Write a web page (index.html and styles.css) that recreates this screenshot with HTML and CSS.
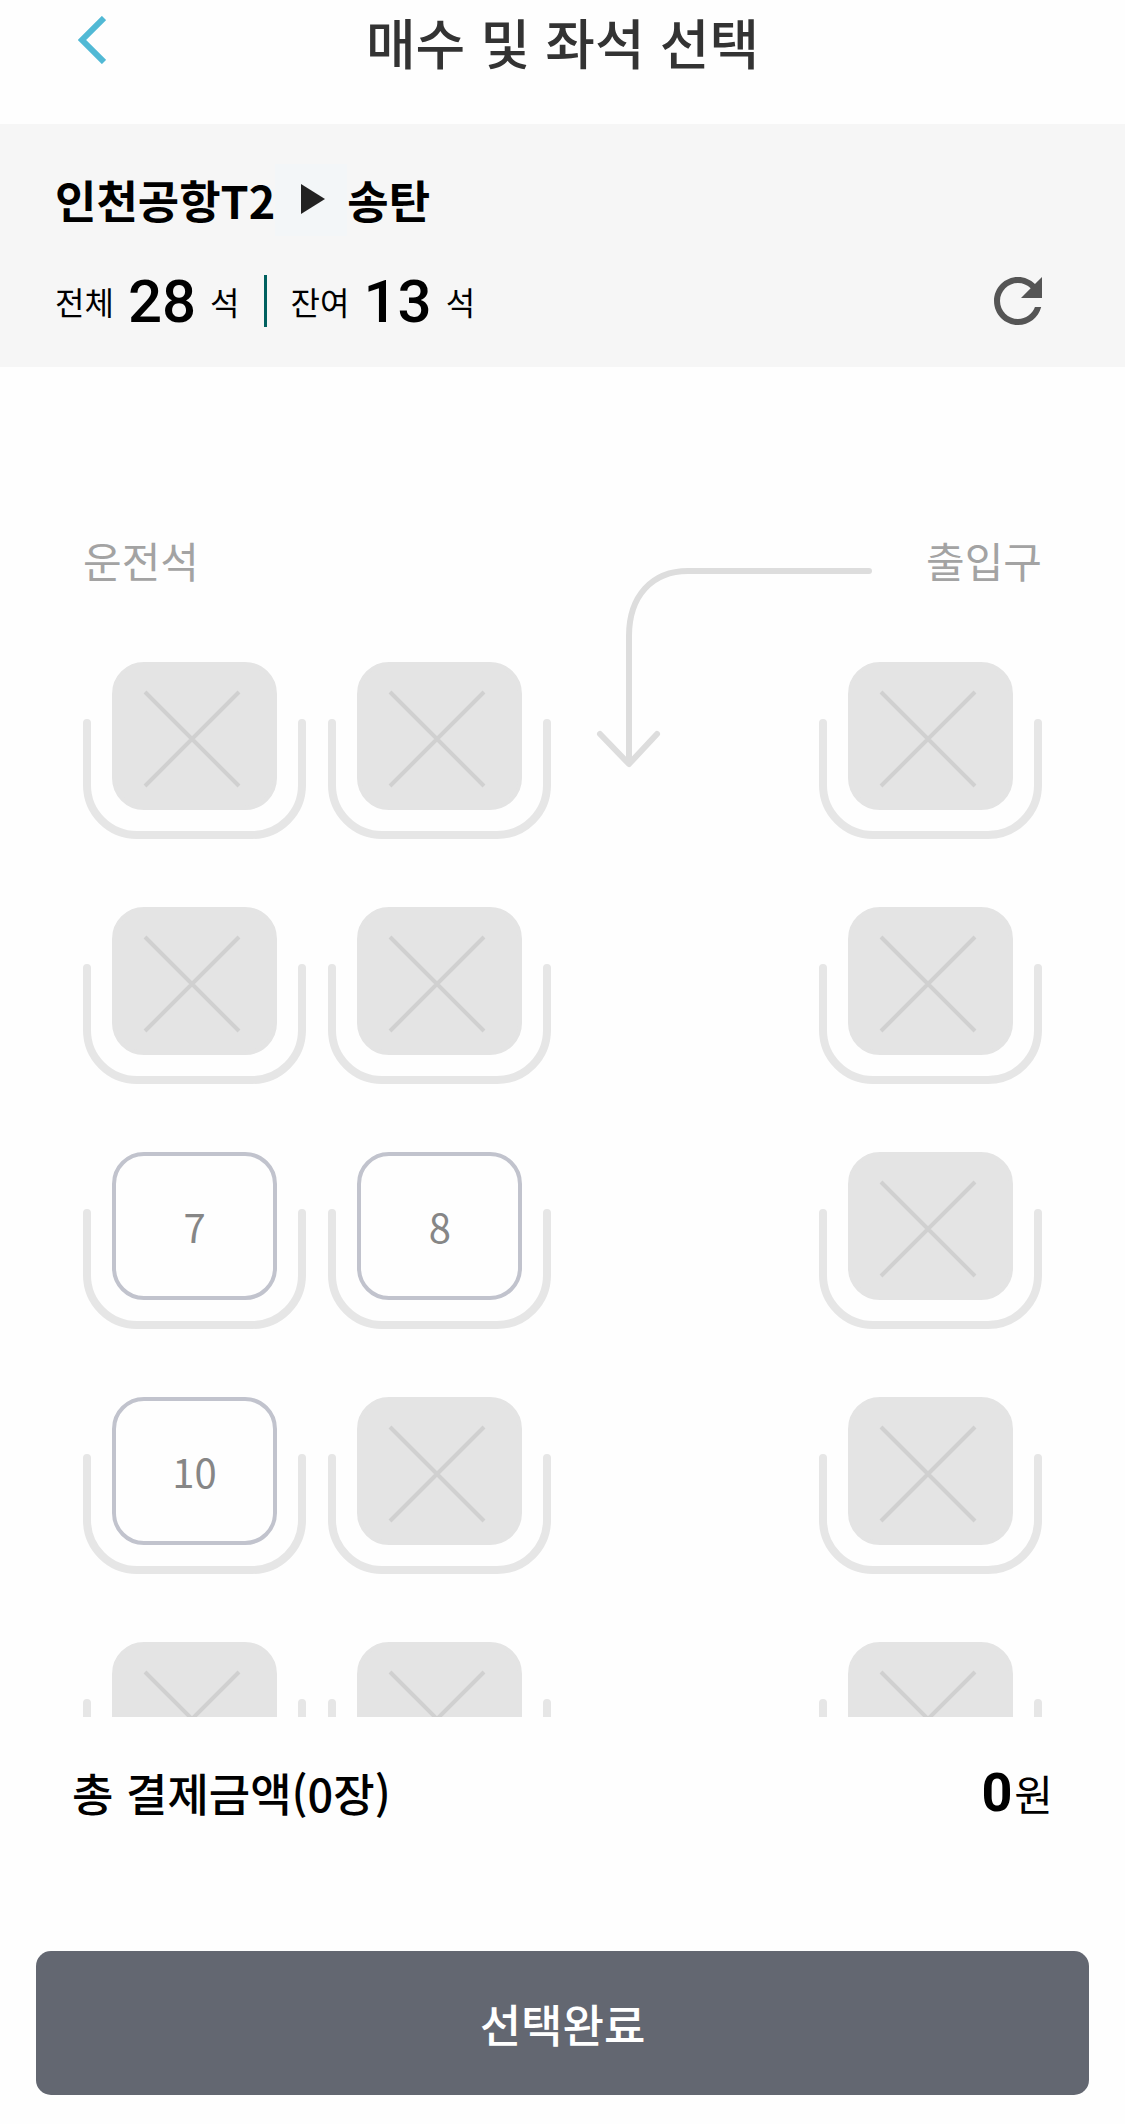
FILE: index.html
```html
<!DOCTYPE html>
<html lang="ko">
<head>
    <meta charset="UTF-8">
    <meta name="viewport" content="width=device-width, initial-scale=1.0">
    <title>매수 및 좌석 선택</title>
    <link rel="stylesheet" href="styles.css">
</head>
<body>
    <!-- shared seat shapes -->
    <svg class="sprite" aria-hidden="true">
        <symbol id="seat-back" viewBox="0 0 223 120">
            <path d="M4 4V66A50 50 0 0 0 54 116H169A50 50 0 0 0 219 66V4"/>
        </symbol>
        <symbol id="seat-cross" viewBox="0 0 98 98">
            <path d="M2 2L96 96M96 2L2 96"/>
        </symbol>
    </svg>

    <header class="top-bar">
        <a href="#" class="btn-back" aria-label="뒤로">
            <svg viewBox="0 0 28 48"><path d="M26 2L4 24L26 46"/></svg>
        </a>
        <h1>매수 및 좌석 선택</h1>
    </header>

    <section class="trip-info">
        <div class="route">
            <span>인천공항T2</span>
            <svg class="route-arrow" viewBox="0 0 72 72"><path d="M26 20L50 35L26 50Z"/></svg>
            <span>송탄</span>
        </div>
        <div class="seat-status">
            <p class="seat-count">전체 <strong>28</strong> 석</p>
            <p class="seat-count">잔여 <strong>13</strong> 석</p>
            <button type="button" class="btn-refresh" aria-label="새로고침">
                <svg viewBox="0 0 24 24"><path d="M17.65 6.35C16.2 4.9 14.21 4 12 4c-4.42 0-7.99 3.58-7.99 8s3.57 8 7.99 8c3.73 0 6.84-2.55 7.73-6h-2.08c-.82 2.33-3.04 4-5.65 4-3.31 0-6-2.69-6-6s2.69-6 6-6c1.66 0 3.14.69 4.22 1.78L13 11h7V4l-2.35 2.35z"/></svg>
            </button>
        </div>
    </section>

    <main class="seat-map">
        <div class="cabin-head">
            <span>운전석</span>
            <span>출입구</span>
            <svg class="door-path" viewBox="0 0 280 200">
                <path d="M273 3H92C56 3 33 28 33 68V194M4 166L33 196L61 166"/>
            </svg>
        </div>

        <div class="seat-grid">
            <button type="button" class="seat taken" aria-label="1번 좌석" disabled><svg class="back"><use href="#seat-back"/></svg><span class="cushion"><svg class="cross"><use href="#seat-cross"/></svg></span></button>
            <button type="button" class="seat taken" aria-label="2번 좌석" disabled><svg class="back"><use href="#seat-back"/></svg><span class="cushion"><svg class="cross"><use href="#seat-cross"/></svg></span></button>
            <button type="button" class="seat taken single" aria-label="3번 좌석" disabled><svg class="back"><use href="#seat-back"/></svg><span class="cushion"><svg class="cross"><use href="#seat-cross"/></svg></span></button>

            <button type="button" class="seat taken" aria-label="4번 좌석" disabled><svg class="back"><use href="#seat-back"/></svg><span class="cushion"><svg class="cross"><use href="#seat-cross"/></svg></span></button>
            <button type="button" class="seat taken" aria-label="5번 좌석" disabled><svg class="back"><use href="#seat-back"/></svg><span class="cushion"><svg class="cross"><use href="#seat-cross"/></svg></span></button>
            <button type="button" class="seat taken single" aria-label="6번 좌석" disabled><svg class="back"><use href="#seat-back"/></svg><span class="cushion"><svg class="cross"><use href="#seat-cross"/></svg></span></button>

            <button type="button" class="seat"><svg class="back"><use href="#seat-back"/></svg><span class="cushion">7</span></button>
            <button type="button" class="seat"><svg class="back"><use href="#seat-back"/></svg><span class="cushion">8</span></button>
            <button type="button" class="seat taken single" aria-label="9번 좌석" disabled><svg class="back"><use href="#seat-back"/></svg><span class="cushion"><svg class="cross"><use href="#seat-cross"/></svg></span></button>

            <button type="button" class="seat"><svg class="back"><use href="#seat-back"/></svg><span class="cushion">10</span></button>
            <button type="button" class="seat taken" aria-label="11번 좌석" disabled><svg class="back"><use href="#seat-back"/></svg><span class="cushion"><svg class="cross"><use href="#seat-cross"/></svg></span></button>
            <button type="button" class="seat taken single" aria-label="12번 좌석" disabled><svg class="back"><use href="#seat-back"/></svg><span class="cushion"><svg class="cross"><use href="#seat-cross"/></svg></span></button>

            <button type="button" class="seat taken" aria-label="13번 좌석" disabled><svg class="back"><use href="#seat-back"/></svg><span class="cushion"><svg class="cross"><use href="#seat-cross"/></svg></span></button>
            <button type="button" class="seat taken" aria-label="14번 좌석" disabled><svg class="back"><use href="#seat-back"/></svg><span class="cushion"><svg class="cross"><use href="#seat-cross"/></svg></span></button>
            <button type="button" class="seat taken single" aria-label="15번 좌석" disabled><svg class="back"><use href="#seat-back"/></svg><span class="cushion"><svg class="cross"><use href="#seat-cross"/></svg></span></button>
        </div>
    </main>

    <footer class="payment">
        <div class="total">
            <span class="total-label">총 결제금액(0장)</span>
            <span class="total-price"><strong>0</strong>원</span>
        </div>
        <button type="button" class="btn-submit">선택완료</button>
    </footer>
</body>
</html>
```
FILE: styles.css
```css
* {
    box-sizing: border-box;
}

body {
    display: flex;
    flex-direction: column;
    height: 100vh;
    margin: 0;
    background-color: #fefefe;
    color: #000;
    font-family: "Noto Sans CJK KR", sans-serif;
}

h1, p {
    margin: 0;
}

button {
    padding: 0;
    border: none;
    background: none;
    font-family: inherit;
    cursor: pointer;
}

.sprite {
    position: absolute;
    width: 0;
    height: 0;
}

/* Top bar */
.top-bar {
    display: grid;
    grid-template-columns: 1fr auto 1fr;
    align-items: start;
    padding: 0 78px 40px;
}

.top-bar h1 {
    color: #333;
    font-size: 54px;
    font-weight: 500;
    line-height: 84px;
}

.btn-back {
    padding-top: 16px;
}

.btn-back svg {
    display: block;
    width: 28px;
    height: 48px;
    fill: none;
    stroke: #51b9d5;
    stroke-width: 6;
}

/* Trip info */
.trip-info {
    display: flex;
    flex-direction: column;
    gap: 29px;
    padding: 40px 71px 30px 55px;
    background-color: #f6f6f6;
}

.route {
    display: flex;
    align-items: center;
    height: 72px;
    font-size: 45px;
    font-weight: 700;
    line-height: 72px;
}

.route-arrow {
    width: 72px;
    height: 72px;
    background-color: #f3f6f8;
    fill: #222;
}

.seat-status {
    display: flex;
    align-items: center;
}

.seat-count {
    display: flex;
    align-items: center;
    gap: 14px;
    height: 52px;
    font-size: 32px;
}

.seat-count strong {
    font-family: Roboto, sans-serif;
    font-size: 60px;
    font-weight: 500;
}

.seat-count + .seat-count {
    margin-left: 24px;
    padding-left: 24px;
    border-left: 3px solid #00605f;
}

.btn-refresh {
    margin-left: auto;
}

.btn-refresh svg {
    display: block;
    width: 72px;
    height: 72px;
    fill: #555;
}

/* Seat map */
.seat-map {
    flex: 1;
    min-height: 0;
    padding: 162px 83px 68px;
    overflow-y: auto;
    scrollbar-width: none;
}

.cabin-head {
    position: relative;
    display: flex;
    justify-content: space-between;
    margin-bottom: 71px;
    color: #a3a3a3;
    font-size: 42px;
    line-height: 62px;
}

/* runs from the door label down into the aisle */
.door-path {
    position: absolute;
    top: 39px;
    left: 50%;
    width: 280px;
    height: 200px;
    margin-left: 33px;
    fill: none;
    stroke: #ddd;
    stroke-width: 6;
    stroke-linecap: round;
    stroke-linejoin: round;
}

.seat-grid {
    display: grid;
    grid-template-columns: repeat(4, 223px);
    justify-content: space-between;
    row-gap: 68px;
}

.seat {
    display: grid;
    justify-items: center;
    height: 177px;
}

.seat.single {
    grid-column: 4;
}

.seat .back,
.seat .cushion {
    grid-area: 1 / 1;
}

.back {
    align-self: end;
    width: 223px;
    height: 120px;
    fill: none;
    stroke: #e6e6e6;
    stroke-width: 8;
    stroke-linecap: round;
}

.cushion {
    display: flex;
    align-items: center;
    justify-content: center;
    align-self: start;
    width: 165px;
    height: 148px;
    border: 4px solid #c1c3cd;
    border-radius: 32px;
    color: #868686;
    font-size: 40px;
}

.taken {
    cursor: default;
}

.taken .cushion {
    padding: 5px 5px 0 0;
    border-color: #e4e4e4;
    background-color: #e4e4e4;
}

.cross {
    width: 98px;
    height: 98px;
    stroke: #d0d0d0;
    stroke-width: 4;
}

/* Payment */
.payment {
    padding: 39px 36px 29px;
}

.total {
    display: flex;
    align-items: center;
    justify-content: space-between;
    height: 72px;
    margin-bottom: 123px;
    padding: 0 36px;
}

.total-label {
    font-size: 45px;
    font-weight: 500;
}

.total-price {
    font-size: 42px;
}

.total-price strong {
    margin-right: 2px;
    font-family: Roboto, sans-serif;
    font-size: 54px;
    font-weight: 700;
}

.btn-submit {
    display: block;
    width: 100%;
    height: 144px;
    border-radius: 15px;
    background-color: #636771;
    color: #fff;
    font-size: 45px;
    font-weight: 500;
}
```
